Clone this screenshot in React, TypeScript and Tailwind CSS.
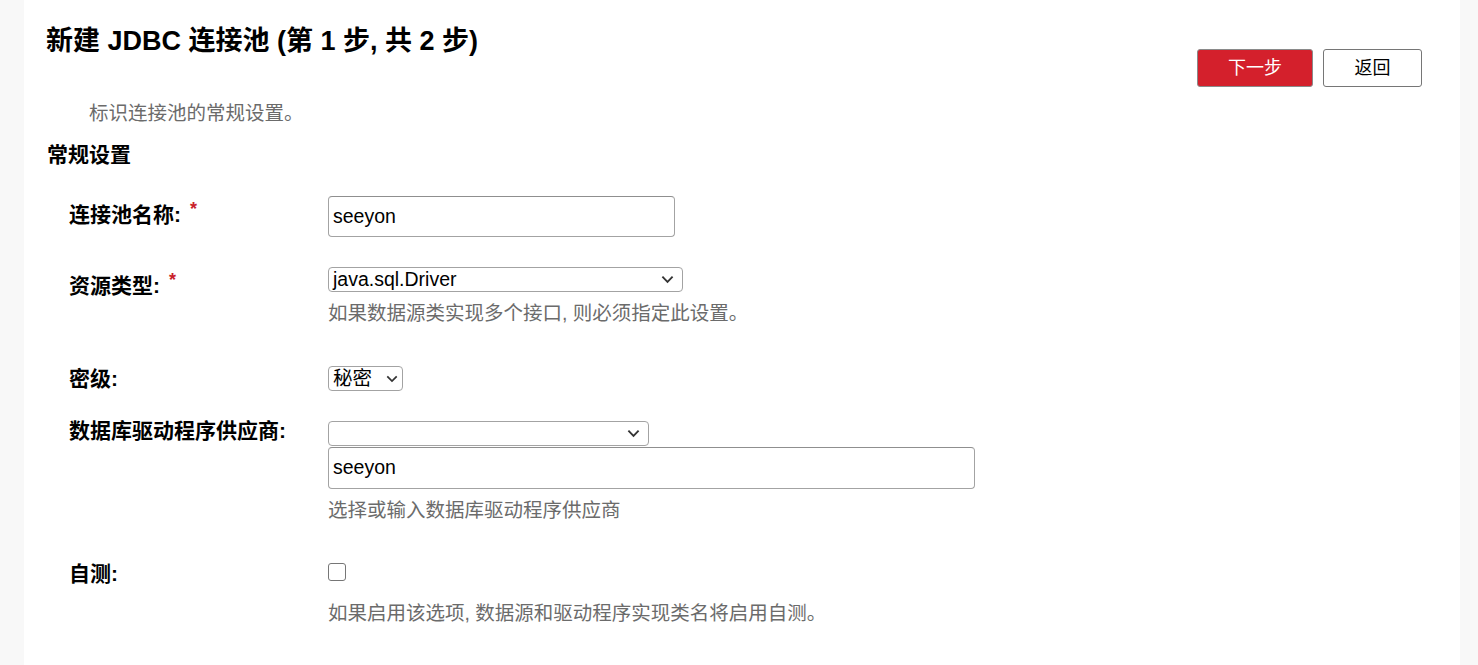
import React from 'react'

const FONT = '[font-family:"Liberation_Sans","Noto_Sans_CJK_SC",sans-serif]'

function Required() {
  return <span className="ml-[9px] relative top-[-7px] text-[18px] text-[#c9212b]">*</span>
}

function Chevron({ className }: { className?: string }) {
  return (
    <svg viewBox="0 0 14 9" className={className} fill="none" stroke="#333" strokeWidth="2">
      <path d="M1.5 1.5 7 7l5.5-5.5" />
    </svg>
  )
}

function FakeSelect({ value, width }: { value: string; width: string }) {
  return (
    <div
      className={`${width} h-[25px] flex items-center justify-between rounded-[4px] border border-[#a3a3a3] bg-white pl-[4px] pr-[8px] text-[19.5px] leading-none text-black`}
    >
      <span>{value}</span>
      <Chevron className="w-[13px] h-[9px] shrink-0" />
    </div>
  )
}

function Help({ children, mt = 'mt-[9px]' }: { children: React.ReactNode; mt?: string }) {
  return <p className={`${mt} text-[19.5px] leading-[24px] text-[#6b6b6b]`}>{children}</p>
}

export default function App() {
  return (
    <div className={`min-h-[665px] bg-[#f8f8f8] pl-[24px] pr-[18px] ${FONT}`}>
      <div className="min-h-[665px] bg-white pl-[22px] pr-[38px] pt-[26px] pb-[30px]">
        {/* header */}
        <div className="flex items-start justify-between">
          <h1 className="text-[27px] font-bold leading-[31px] text-black">
            新建 JDBC 连接池 (第 1 步, 共 2 步)
          </h1>
          <div className="mt-[23px] flex gap-[10px]">
            <button className="h-[38px] w-[116px] rounded-[3px] border border-[#8a8a8a] bg-[#d4202c] text-[18px] text-white">
              下一步
            </button>
            <button className="h-[38px] w-[99px] rounded-[3px] border border-[#767676] bg-white text-[18px] text-black">
              返回
            </button>
          </div>
        </div>

        <p className="mt-[14px] pl-[43px] text-[19.5px] leading-[24px] text-[#6b6b6b]">
          标识连接池的常规设置。
        </p>

        <h2 className="mt-[17px] pl-px text-[21px] font-bold leading-[26px] text-black">常规设置</h2>

        <div className="pl-[23px] text-[21px] text-black">
          {/* 连接池名称 */}
          <div className="mt-[28px] flex items-start">
            <div className="w-[259px] shrink-0 pt-[7px] font-bold leading-[24px]">
              连接池名称:<Required />
            </div>
            <div className="h-[41px] w-[347px] flex items-center rounded-[4px] border border-[#a3a3a3] border-t-[#8f8f8f] pl-[4px] text-[19.5px]">
              seeyon
            </div>
          </div>

          {/* 资源类型 */}
          <div className="mt-[30px] flex items-start">
            <div className="w-[259px] shrink-0 pt-[7px] font-bold leading-[24px]">
              资源类型:<Required />
            </div>
            <div>
              <FakeSelect value="java.sql.Driver" width="w-[355px]" />
              <Help>如果数据源类实现多个接口, 则必须指定此设置。</Help>
            </div>
          </div>

          {/* 密级 */}
          <div className="mt-[41px] flex items-start">
            <div className="w-[259px] shrink-0 pt-px font-bold leading-[24px]">密级:</div>
            <div className="h-[25px] w-[75px] flex items-center justify-between rounded-[4px] border border-[#a3a3a3] pl-[4px] pr-[4px] text-[19.5px] leading-none">
              <span>秘密</span>
              <Chevron className="w-[12px] h-[8px]" />
            </div>
          </div>

          {/* 数据库驱动程序供应商 */}
          <div className="mt-[28px] flex items-start">
            <div className="w-[259px] shrink-0 font-bold leading-[24px]">数据库驱动程序供应商:</div>
            <div className="pt-[2px]">
              <FakeSelect value="" width="w-[321px]" />
              <div className="mt-px h-[42px] w-[647px] flex items-center rounded-[4px] border border-[#a3a3a3] border-t-[#8f8f8f] pl-[4px] text-[19.5px]">
                seeyon
              </div>
              <Help>选择或输入数据库驱动程序供应商</Help>
            </div>
          </div>

          {/* 自测 */}
          <div className="mt-[40px] flex items-start">
            <div className="w-[259px] shrink-0 font-bold leading-[24px]">自测:</div>
            <div className="pt-px">
              <div className="h-[18px] w-[18px] rounded-[3px] border border-[#767676] bg-white" />
              <Help mt="mt-[20px]">如果启用该选项, 数据源和驱动程序实现类名将启用自测。</Help>
            </div>
          </div>
        </div>
      </div>
    </div>
  )
}
